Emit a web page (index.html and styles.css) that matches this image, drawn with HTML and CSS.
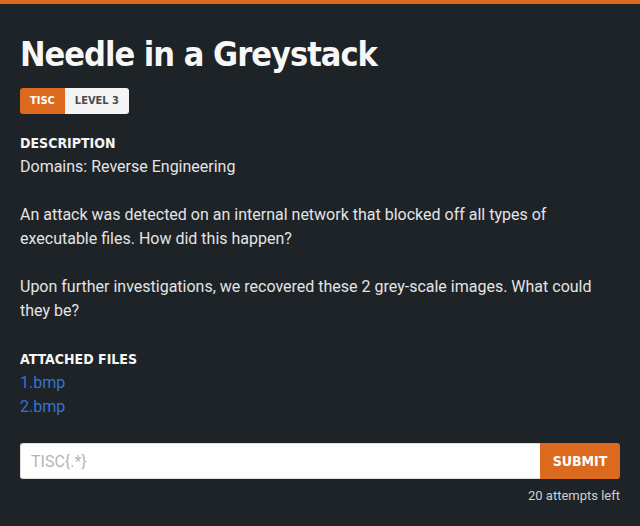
FILE: index.html
```html
<!DOCTYPE html>
<html lang="en">
  <head>
    <meta charset="UTF-8" />
    <meta name="viewport" content="width=device-width, initial-scale=1.0" />
    <title>Needle in a Greystack</title>
    <link rel="stylesheet" href="styles.css">
  </head>

  <body>
    <div class="challenge">
      <h1 class="title">Needle in a Greystack</h1>
      <div class="tags">
        <span class="tag tag-cat">TISC</span>
        <span class="tag tag-level">LEVEL 3</span>
      </div>

      <h2 class="label">DESCRIPTION</h2>
      <div class="desc">
        <p>Domains: Reverse Engineering</p>
        <p>An attack was detected on an internal network that blocked off all types of executable files. How did this happen?</p>
        <p>Upon further investigations, we recovered these 2 grey-scale images. What could they be?</p>
      </div>

      <h2 class="label">ATTACHED FILES</h2>
      <div class="files">
        <a href="#">1.bmp</a>
        <a href="#">2.bmp</a>
      </div>

      <form class="flag-form">
        <input type="text" placeholder="TISC{.*}" />
        <button type="button">SUBMIT</button>
      </form>
      <div class="attempts">20 attempts left</div>
    </div>
  </body>
</html>
```

FILE: styles.css
```css
body {
  margin: 0;
  background-color: #1e2327;
  border-top: 4px solid #dc6a1e;
  font-family: Roboto, "Liberation Sans", sans-serif;
  color: #e4e4e4;
}

.challenge {
  padding: 27px 20px 20px;
}

.title {
  margin: 0;
  font-family: "DejaVu Sans Condensed", "DejaVu Sans", sans-serif;
  font-weight: bold;
  font-size: 34px;
  line-height: 46px;
  letter-spacing: -1px;
  color: #f7f7f7;
}

.tags {
  display: inline-flex;
  margin-top: 11px;
  border-radius: 3px;
  overflow: hidden;
  font-family: "DejaVu Sans Condensed", "DejaVu Sans", sans-serif;
  font-weight: bold;
  font-size: 11px;
}

.tag {
  padding: 0 10px;
  line-height: 26px;
}

.tag-cat {
  background-color: #dc6a1e;
  color: #fff;
}

.tag-level {
  background-color: #f4f4f4;
  color: #4a4a4a;
}

.label {
  margin: 20px 0 3px;
  font-family: "DejaVu Sans Condensed", "DejaVu Sans", sans-serif;
  font-weight: bold;
  font-size: 14px;
  line-height: 18px;
  color: #f5f5f5;
}

.desc {
  margin-bottom: 27px;
}

.desc p {
  margin: 0 0 24px;
  font-size: 16px;
  line-height: 24px;
}

.desc p:last-child {
  margin-bottom: 0;
}

.files a {
  display: block;
  font-size: 16px;
  line-height: 24px;
  color: #3573d3;
  text-decoration: none;
}

.flag-form {
  display: flex;
  margin-top: 24px;
}

.flag-form input {
  flex: 1;
  height: 36px;
  box-sizing: border-box;
  border: 1px solid #ddd;
  border-right: none;
  border-radius: 3px 0 0 3px;
  padding: 0 10px;
  font-family: Roboto, sans-serif;
  font-size: 16px;
  color: #333;
}

.flag-form input::placeholder {
  color: #b5b5b5;
}

.flag-form button {
  width: 80px;
  height: 36px;
  border: none;
  border-radius: 0 3px 3px 0;
  background-color: #dc6a1e;
  color: #fff;
  font-family: "DejaVu Sans Condensed", "DejaVu Sans", sans-serif;
  font-weight: bold;
  font-size: 14px;
}

.attempts {
  margin-top: 9px;
  text-align: right;
  font-size: 13px;
  color: #cfcfcf;
}
```
